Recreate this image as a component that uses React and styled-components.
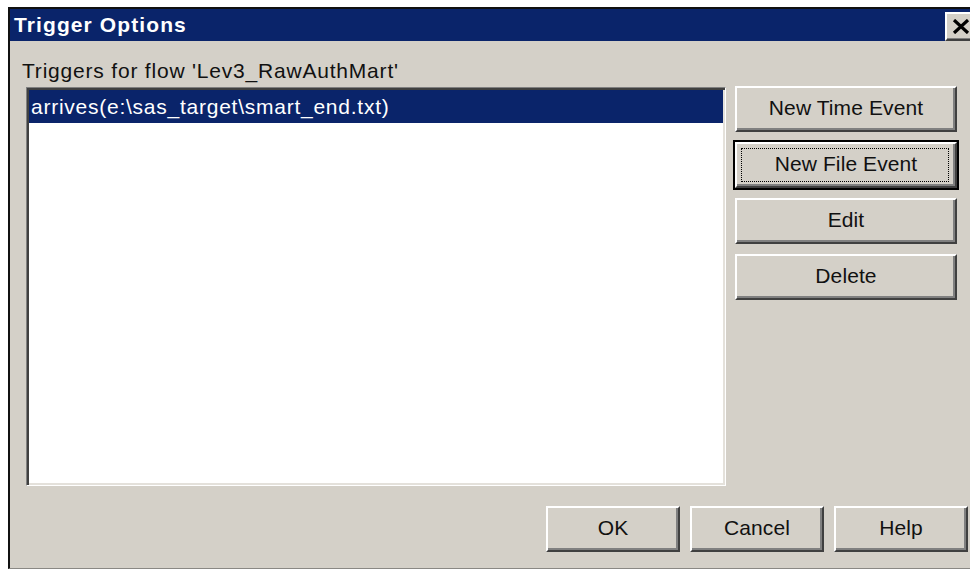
import React from 'react';
import styled, { createGlobalStyle } from 'styled-components';

const GlobalStyle = createGlobalStyle`
  html, body {
    margin: 0;
    background: #ffffff;
    overflow: hidden;
  }
  body {
    font-family: "Liberation Sans", Arial, sans-serif;
  }
`;

const Window = styled.div`
  margin: 7px 0 0 8px;
  width: 972px;
  height: 559px;
  background: #d4d0c8;
  border-top: 2px solid #111;
  border-left: 2px solid #111;
  border-bottom: 1px solid #8a8884;
  display: flex;
  flex-direction: column;
`;

const TitleBar = styled.div`
  height: 32px;
  background: #0a246a;
  display: flex;
  align-items: center;
  padding: 0 5px 0 4px;
  flex-shrink: 0;
`;

const Title = styled.span`
  color: #fff;
  font-weight: bold;
  font-size: 21px;
  letter-spacing: 1.1px;
  margin-top: -1px;
`;

const CloseButton = styled.div`
  margin-left: auto;
  margin-top: 3px;
  width: 32px;
  height: 29px;
  box-sizing: border-box;
  background: #d4d0c8;
  border-top: 2px solid #fff;
  border-left: 2px solid #fff;
  border-bottom: 2px solid #404040;
  border-right: 2px solid #404040;
  box-shadow: inset -1px -1px #808080;
  display: flex;
  align-items: center;
  justify-content: center;
  align-self: flex-start;
`;

const Body = styled.div`
  flex: 1;
  display: flex;
  flex-direction: column;
  padding: 18px 13px 0 0;
  color: #111;
  font-size: 21px;
`;

const Label = styled.div`
  margin-left: 12px;
  line-height: 24px;
  letter-spacing: 0.8px;
`;

const MainRow = styled.div`
  display: flex;
  gap: 9px;
  margin-top: 3px;
  padding-left: 16px;
`;

const ListBox = styled.div`
  width: 700px;
  height: 399px;
  margin-top: 1px;
  box-sizing: border-box;
  background: #fff;
  border-top: 1px solid #808080;
  border-left: 1px solid #808080;
  border-bottom: 1px solid #fff;
  border-right: 1px solid #fff;
  box-shadow: inset 2px 2px #404040, inset -2px -2px #e4e1db;
  padding: 2px;
`;

const ListItem = styled.div`
  height: 33px;
  line-height: 33px;
  padding-left: 2px;
  letter-spacing: 0.75px;
  background: ${p => (p.selected ? '#0a246a' : 'transparent')};
  color: ${p => (p.selected ? '#fff' : '#000')};
  white-space: nowrap;
`;

const ButtonColumn = styled.div`
  display: flex;
  flex-direction: column;
  gap: 10px;
  width: 222px;
`;

const Button = styled.div`
  position: relative;
  width: ${p => p.width || 222}px;
  height: 46px;
  box-sizing: border-box;
  background: #d4d0c8;
  border-top: 2px solid #fff;
  border-left: 2px solid #fff;
  border-bottom: 2px solid #404040;
  border-right: 2px solid #404040;
  box-shadow: inset -2px -2px #808080;
  display: flex;
  align-items: center;
  justify-content: center;
  padding-bottom: 2px;
  font-size: 21px;
  letter-spacing: 0.1px;

  ${p =>
    p.focused &&
    `
    outline: 2px solid #000;
    outline-offset: 0;
    &::after {
      content: '';
      position: absolute;
      inset: 4px 6px 4px 4px;
      border: 1px dotted #000;
    }
  `}
`;

const Footer = styled.div`
  margin-top: 20px;
  display: flex;
  justify-content: flex-end;
  gap: 10px;
  padding-right: 1px;
`;

const CloseGlyph = () => (
  <svg width="18" height="15" viewBox="0 0 18 15">
    <path d="M2 1 L16 14 M16 1 L2 14" stroke="#000" strokeWidth="3.2" />
  </svg>
);

const triggers = ['arrives(e:\\sas_target\\smart_end.txt)'];

export default function App() {
  return (
    <>
      <GlobalStyle />
      <Window>
        <TitleBar>
          <Title>Trigger Options</Title>
          <CloseButton>
            <CloseGlyph />
          </CloseButton>
        </TitleBar>
        <Body>
          <Label>Triggers for flow 'Lev3_RawAuthMart'</Label>
          <MainRow>
            <ListBox>
              {triggers.map((t, i) => (
                <ListItem key={t} selected={i === 0}>
                  {t}
                </ListItem>
              ))}
            </ListBox>
            <ButtonColumn>
              <Button>New Time Event</Button>
              <Button focused>New File Event</Button>
              <Button>Edit</Button>
              <Button>Delete</Button>
            </ButtonColumn>
          </MainRow>
          <Footer>
            <Button width={134}>OK</Button>
            <Button width={134}>Cancel</Button>
            <Button width={134}>Help</Button>
          </Footer>
        </Body>
      </Window>
    </>
  );
}
